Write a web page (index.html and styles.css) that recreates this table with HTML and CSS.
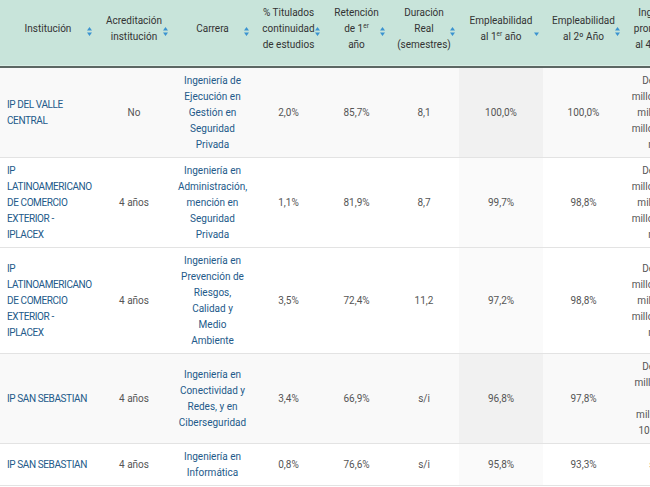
FILE: index.html
```html
<!DOCTYPE html>
<html lang="es">
<head>
<meta charset="utf-8">
<title>Resultados</title>
<link rel="stylesheet" href="styles.css">
</head>
<body>
<svg width="0" height="0" class="defs" aria-hidden="true">
  <defs>
    <symbol id="sort-both" viewBox="0 0 5 9"><path d="M0 3.6 2.5 0 5 3.6Z M0 5.4 2.5 9 5 5.4Z"/></symbol>
    <symbol id="sort-desc" viewBox="0 0 5 9"><path d="M0 5.4 2.5 9 5 5.4Z"/></symbol>
  </defs>
</svg>
<div class="wrap">
<table class="results">
  <colgroup>
    <col class="c-inst"><col class="c-acr"><col class="c-car"><col class="c-tit"><col class="c-ret"><col class="c-dur"><col class="c-e1"><col class="c-e2"><col class="c-ing"><col class="c-extra">
  </colgroup>
  <thead>
    <tr>
      <th>Institución<svg class="sort"><use href="#sort-both"/></svg></th>
      <th>Acreditación<br>institución<svg class="sort"><use href="#sort-both"/></svg></th>
      <th>Carrera<svg class="sort"><use href="#sort-both"/></svg></th>
      <th>% Titulados<br>continuidad<br>de estudios<svg class="sort"><use href="#sort-both"/></svg></th>
      <th>Retención<br>de 1<sup>er</sup><br>año<svg class="sort"><use href="#sort-both"/></svg></th>
      <th>Duración<br>Real<br>(semestres)<svg class="sort"><use href="#sort-both"/></svg></th>
      <th class="sorted">Empleabilidad<br>al 1<sup>er</sup> año<svg class="sort"><use href="#sort-desc"/></svg></th>
      <th>Empleabilidad<br>al 2º Año<svg class="sort"><use href="#sort-both"/></svg></th>
      <th>Ingreso<br>promedio<br>al 4º año<svg class="sort"><use href="#sort-both"/></svg></th>
      <th>Arancel<br>anual</th>
    </tr>
  </thead>
  <tbody>
    <tr class="shade">
      <td class="name">IP DEL VALLE<br>CENTRAL</td>
      <td>No</td>
      <td class="name">Ingeniería de<br>Ejecución en<br>Gestión en<br>Seguridad<br>Privada</td>
      <td>2,0%</td>
      <td>85,7%</td>
      <td>8,1</td>
      <td class="sorted">100,0%</td>
      <td>100,0%</td>
      <td>De $1<br>millón 100<br>mil a $1<br>millón 200<br>mil</td>
      <td>$2.900.000</td>
    </tr>
    <tr>
      <td class="name">IP<br>LATINOAMERICANO<br>DE COMERCIO<br>EXTERIOR -<br>IPLACEX</td>
      <td>4 años</td>
      <td class="name">Ingeniería en<br>Administración,<br>mención en<br>Seguridad<br>Privada</td>
      <td>1,1%</td>
      <td>81,9%</td>
      <td>8,7</td>
      <td class="sorted">99,7%</td>
      <td>98,8%</td>
      <td>De $1<br>millón 000<br>mil a $1<br>millón 100<br>mil</td>
      <td>$2.400.000</td>
    </tr>
    <tr>
      <td class="name">IP<br>LATINOAMERICANO<br>DE COMERCIO<br>EXTERIOR -<br>IPLACEX</td>
      <td>4 años</td>
      <td class="name">Ingeniería en<br>Prevención de<br>Riesgos,<br>Calidad y<br>Medio<br>Ambiente</td>
      <td>3,5%</td>
      <td>72,4%</td>
      <td>11,2</td>
      <td class="sorted">97,2%</td>
      <td>98,8%</td>
      <td>De $1<br>millón 000<br>mil a $1<br>millón 100<br>mil</td>
      <td>$2.400.000</td>
    </tr>
    <tr class="shade">
      <td class="name">IP SAN SEBASTIAN</td>
      <td>4 años</td>
      <td class="name">Ingeniería en<br>Conectividad y<br>Redes, y en<br>Ciberseguridad</td>
      <td>3,4%</td>
      <td>66,9%</td>
      <td>s/i</td>
      <td class="sorted">96,8%</td>
      <td>97,8%</td>
      <td>De $1<br>millón 50<br>a<br>millones<br>100 mil</td>
      <td>$2.700.000</td>
    </tr>
    <tr>
      <td class="name">IP SAN SEBASTIAN</td>
      <td>4 años</td>
      <td class="name">Ingeniería en<br>Informática</td>
      <td>0,8%</td>
      <td>76,6%</td>
      <td>s/i</td>
      <td class="sorted">95,8%</td>
      <td>93,3%</td>
      <td>s/i</td>
      <td>$2.700.000</td>
    </tr>
  </tbody>
</table>
</div>
</body>
</html>
```
FILE: styles.css
```css
html, body {
  margin: 0;
  padding: 0;
  background: #ffffff;
}
body {
  font-family: Roboto, "Liberation Sans", sans-serif;
  font-size: 10px;
  line-height: 16px;
  color: #555555;
  overflow: hidden;
}
.defs {
  position: absolute;
  width: 0;
  height: 0;
}
.wrap {
  width: 800px;
}
.results {
  border-collapse: collapse;
  table-layout: fixed;
  width: 800px;
}
.c-inst { width: 96px; }
.c-acr { width: 76px; }
.c-car { width: 81px; }
.c-tit { width: 71px; }
.c-ret { width: 65px; }
.c-dur { width: 70px; }
.c-e1 { width: 84px; }
.c-e2 { width: 81px; }
.c-ing { width: 62px; }
.c-extra { width: 114px; }

.results th {
  position: relative;
  background: #c8e4da;
  color: #333333;
  font-weight: 400;
  text-align: center;
  vertical-align: middle;
  white-space: nowrap;
  padding: 5px 4px 13px;
  height: 48px;
  border-bottom: 2px solid #5c6763;
  box-shadow: inset 0 -1px 0 #d9eee6;
}
.results sup {
  font-size: 6.5px;
  line-height: 0;
  vertical-align: 4px;
}
.sort {
  position: absolute;
  right: 4px;
  top: 50%;
  width: 5px;
  height: 9px;
  margin-top: -6px;
  fill: #3b93d0;
}
.results td {
  text-align: center;
  vertical-align: middle;
  white-space: nowrap;
  padding: 4.5px 4px;
  border-bottom: 1px solid #e3e3e3;
  background: #ffffff;
}
.results td.name {
  color: #235a8a;
}
.results td:first-child {
  text-align: left;
  padding-left: 7px;
  letter-spacing: -0.4px;
}
.results td.sorted {
  background: #fafafa;
}
.results tr.shade td {
  background: #f9f9f9;
}
.results tr.shade td.sorted {
  background: #f1f1f1;
}
```
